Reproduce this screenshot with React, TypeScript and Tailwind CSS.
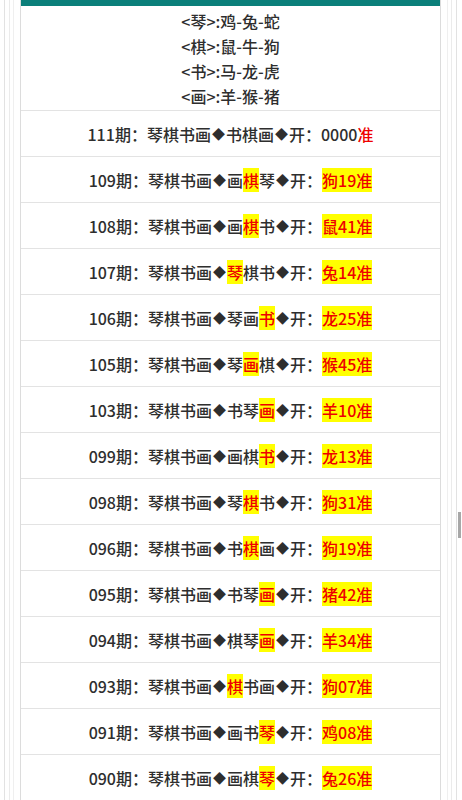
const groups = ['<琴>:鸡-兔-蛇', '<棋>:鼠-牛-狗', '<书>:马-龙-虎', '<画>:羊-猴-猪'];

type Row = { no: string; pick: string; hl: number; result: string };

const rows: Row[] = [
  { no: '111', pick: '书棋画', hl: -1, result: '0000' },
  { no: '109', pick: '画棋琴', hl: 1, result: '狗19' },
  { no: '108', pick: '画棋书', hl: 1, result: '鼠41' },
  { no: '107', pick: '琴棋书', hl: 0, result: '兔14' },
  { no: '106', pick: '琴画书', hl: 2, result: '龙25' },
  { no: '105', pick: '琴画棋', hl: 1, result: '猴45' },
  { no: '103', pick: '书琴画', hl: 2, result: '羊10' },
  { no: '099', pick: '画棋书', hl: 2, result: '龙13' },
  { no: '098', pick: '琴棋书', hl: 1, result: '狗31' },
  { no: '096', pick: '书棋画', hl: 1, result: '狗19' },
  { no: '095', pick: '书琴画', hl: 2, result: '猪42' },
  { no: '094', pick: '棋琴画', hl: 2, result: '羊34' },
  { no: '093', pick: '棋书画', hl: 0, result: '狗07' },
  { no: '091', pick: '画书琴', hl: 2, result: '鸡08' },
  { no: '090', pick: '画棋琴', hl: 2, result: '兔26' },
];

const Diamond = () => <span className="px-[1px] text-[13px]">◆</span>;

function HistoryRow({ row }: { row: Row }) {
  const open = row.hl >= 0;
  return (
    <div className="h-[46px] border-b border-[#e3e3e3] flex items-center justify-center text-[16px] text-[#2e2e2e]">
      <span>{row.no}期：琴棋书画</span>
      <Diamond />
      {row.pick.split('').map((c, i) =>
        i === row.hl ? (
          <span key={i} className="bg-[#ffff00] text-[#ee0000]">{c}</span>
        ) : (
          <span key={i}>{c}</span>
        )
      )}
      <Diamond />
      <span>开：</span>
      {open ? (
        <span className="bg-[#ffff00] text-[#ee0000]">{row.result}准</span>
      ) : (
        <span>
          {row.result}
          <span className="text-[#ee0000]">准</span>
        </span>
      )}
    </div>
  );
}

export default function App() {
  return (
    <div
      className="relative h-[800px] overflow-hidden bg-white pl-[4px] pr-[5px] font-medium"
      style={{ fontFamily: '"Noto Sans CJK SC", "Noto Sans", sans-serif' }}
    >
      <div className="h-full border-x border-[#e2e2e2] px-[4px]">
        <div className="h-full border-x border-[#ebebeb] px-[3px]">
          <div className="h-full border-x border-[#efefef] px-[6px]">
            <div className="h-full border-x border-[#dcdcdc]">
              <div className="h-[6px] bg-[#0b7f7a]" />
              {/* zodiac groups */}
              <div className="pt-[3px] pb-[1px] border-b border-[#e3e3e3] text-center text-[16px] leading-[25px] text-[#2e2e2e]">
                {groups.map((g) => (
                  <div key={g}>{g}</div>
                ))}
              </div>
              {rows.map((r) => (
                <HistoryRow key={r.no} row={r} />
              ))}
            </div>
          </div>
        </div>
      </div>
      {/* scrollbar thumb */}
      <div className="absolute right-[1px] top-[512px] h-[26px] w-[3px] bg-[#a8a8a8]" />
    </div>
  );
}
